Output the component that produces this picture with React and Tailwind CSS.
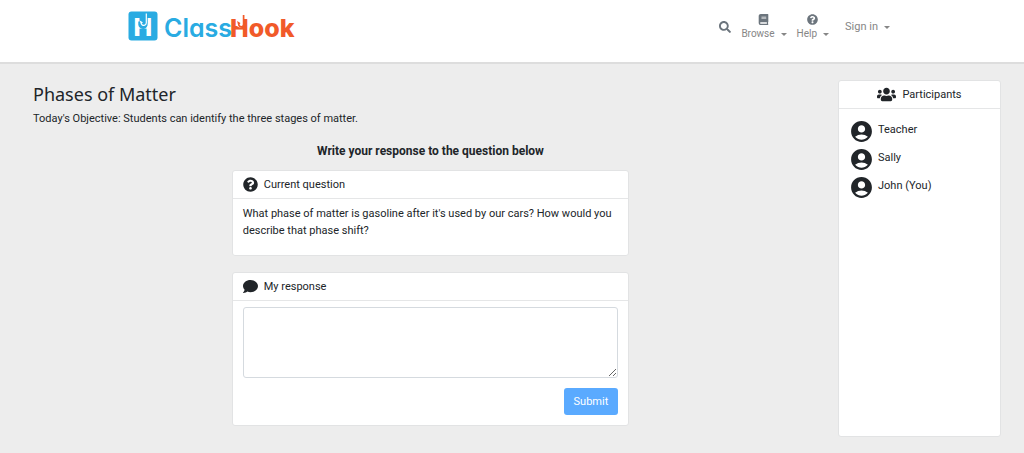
import { useState } from "react";
import { FaBook, FaComment, FaQuestionCircle, FaSearch, FaUsers } from "react-icons/fa";
import { MdAccountCircle } from "react-icons/md";

const participants = ["Teacher", "Sally", "John (You)"];

function Logo() {
  return (
    <a href="#" aria-label="ClassHook">
      <svg width="170" height="32" viewBox="0 0 170 32" fontFamily="Inter, sans-serif" className="[font-feature-settings:'cv11']">
        <rect x="0.5" y="1.5" width="29" height="29" rx="3" fill="#29abe2" />
        <text x="5.5" y="26" fontSize="25" fontWeight="800" fill="#fff">H</text>
        <path d="M18 5v9a3 3 0 0 1-6 .5v-3" fill="none" stroke="#29abe2" strokeWidth="3.4" />
        <path d="M18.3 3.5v9.5a2.6 2.6 0 0 1-5 .8l-.6-2 1.8 1" fill="none" stroke="#fff" strokeWidth="1.2" />
        <text x="36" y="27" fontSize="25" fontWeight="600" fill="#29abe2">Class</text>
        <text x="102" y="27" fontSize="25" fontWeight="800" fill="#f15a29">Hook</text>
        <path d="M114.6 9v5a2.6 2.6 0 0 1-5 .4V10" fill="none" stroke="#fff" strokeWidth="2.6" />
        <path d="M115.6 5v9.2a2.4 2.4 0 0 1-4.8.4l-.4-1.8 1.6 1" fill="none" stroke="#f15a29" strokeWidth="1.7" />
      </svg>
    </a>
  );
}

function Caret() {
  return <span className="ml-1.5 inline-block border-x-3 border-t-3 border-x-transparent border-t-[#868686]" />;
}

function Card({ icon, title, center, className = "", children }) {
  return (
    <section className={`rounded-[3px] border border-[#e2e3e4] bg-white ${className}`}>
      <h2 className={`flex h-7 items-center gap-1.5 border-b border-[#e5e6e7] px-2.5 ${center ? "justify-center" : ""}`}>
        {icon}
        {title}
      </h2>
      {children}
    </section>
  );
}

export default function App() {
  const [response, setResponse] = useState("");

  const submit = (e) => {
    e.preventDefault();
    setResponse("");
  };

  return (
    <div className="flex min-h-screen flex-col bg-[#ededed] font-['Roboto',sans-serif] text-[11px] leading-[17px] text-[#212529]">
      <header className="flex h-16 justify-between border-b-2 border-[#dddddd] bg-white pt-2.5 pr-[134px] pl-32">
        <Logo />
        <nav className="flex items-start text-[10px] leading-4 text-[#6c757d]">
          <button aria-label="Search" className="mt-[11px] mr-2.5">
            <FaSearch size={12} />
          </button>
          <button className="mt-1 mr-2.5 flex flex-col items-center">
            <FaBook size={11} />
            <span className="flex items-center pt-px text-[#868686]">Browse <Caret /></span>
          </button>
          <button className="mt-1 mr-4 flex flex-col items-center">
            <FaQuestionCircle size={11} />
            <span className="flex items-center pt-px text-[#868686]">Help <Caret /></span>
          </button>
          <button className="mt-[9px] flex items-center text-[11px] text-[#868686]">Sign in <Caret /></button>
        </nav>
      </header>

      <main className="flex flex-1 gap-2.5 pt-4 pr-[23px] pb-4 pl-[33px]">
        <div className="flex-1">
          <h1 className="font-['Noto_Sans',sans-serif] text-[18px] leading-7">Phases of Matter</h1>
          <p className="mt-0.5">Today's Objective: Students can identify the three stages of matter.</p>
          <p className="mt-4 text-center text-xs leading-[17px] font-bold">Write your response to the question below</p>

          <div className="mx-auto mt-2.5 w-1/2 space-y-4">
            <Card icon={<FaQuestionCircle size={15} />} title="Current question">
              <p className="px-2.5 pt-1.5 pb-4">
                What phase of matter is gasoline after it's used by our cars? How would you describe that phase shift?
              </p>
            </Card>

            <Card icon={<FaComment size={15} />} title="My response">
              <form onSubmit={submit} className="px-2.5 pt-1.5 pb-2.5">
                <textarea
                  aria-label="My response"
                  value={response}
                  onChange={(e) => setResponse(e.target.value)}
                  className="block h-[71px] w-full rounded-[3px] border border-[#d5dadf] bg-white p-1.5"
                />
                <div className="mt-2.5 flex justify-end">
                  <button type="submit" className="rounded-[3px] bg-[#5aaaff] px-2.5 py-[5px] text-white">
                    Submit
                  </button>
                </div>
              </form>
            </Card>
          </div>
        </div>

        <aside className="flex w-[163px] flex-col">
          <Card icon={<FaUsers size={19} />} title="Participants" center className="flex-1">
            <ul className="space-y-1 px-2.5 pt-2.5">
              {participants.map((name) => (
                <li key={name} className="flex h-6 items-center gap-1">
                  <MdAccountCircle size={25} />
                  <span className="pb-1">{name}</span>
                </li>
              ))}
            </ul>
          </Card>
        </aside>
      </main>
    </div>
  );
}
